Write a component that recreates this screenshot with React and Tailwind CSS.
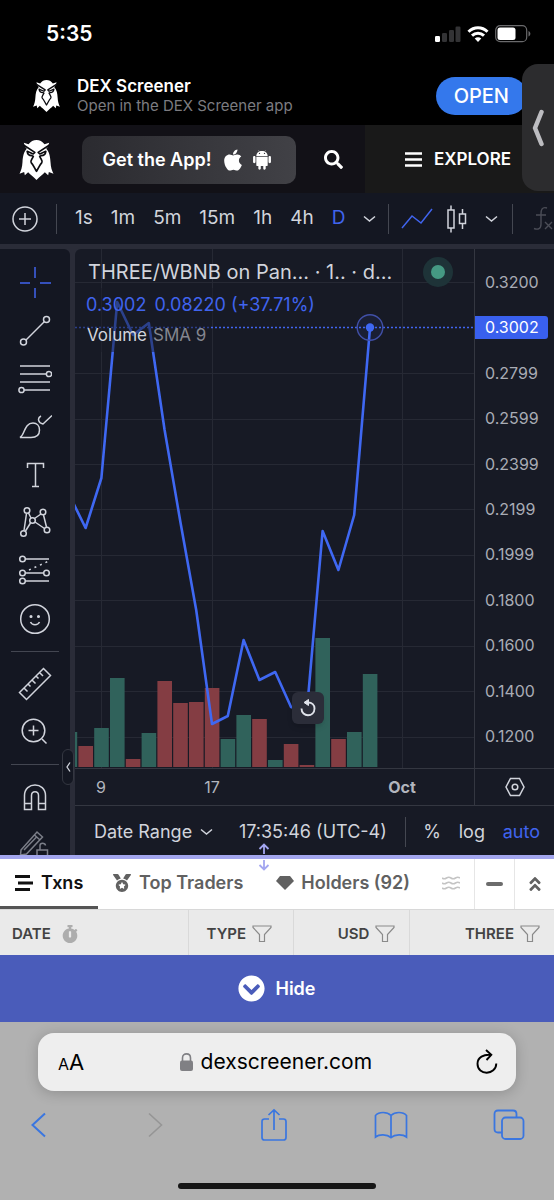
import React from 'react';
import {
    FaAngleDoubleUp,
    FaApple,
    FaChevronCircleDown,
    FaMedal,
    FaSearch,
    FaStopwatch,
} from 'react-icons/fa';
import { IoLogoAndroid } from 'react-icons/io';

const PRICE_LABELS = [
    '0.3200', '0.3002', '0.2799', '0.2599', '0.2399', '0.2199',
    '0.1999', '0.1800', '0.1600', '0.1400', '0.1200',
];

const GRID_ROWS = [33, 124, 170, 215, 260, 306, 351, 397, 442, 488];

// oldest candle first, closing price as y inside the plot
const CLOSES = [247, 279, 229, 53, 86, 74, 181, 273, 361, 475, 467, 391, 431, 423, 458, 463, 282, 321, 266, 79];

const VOLUMES = [
    { top: 483, up: true }, { top: 497, up: false }, { top: 479, up: true }, { top: 429, up: true },
    { top: 510, up: false }, { top: 484, up: true }, { top: 432, up: false }, { top: 454, up: false },
    { top: 453, up: false }, { top: 439, up: false }, { top: 490, up: true }, { top: 466, up: true },
    { top: 470, up: false }, { top: 511, up: true }, { top: 495, up: false }, { top: 516, up: false },
    { top: 389, up: true }, { top: 490, up: false }, { top: 483, up: true }, { top: 425, up: true },
];

const candleX = (i) => 295 - (CLOSES.length - 1 - i) * 15.8;

const EagleLogo = ({ className }) => (
    <svg viewBox="0 0 102 120" className={className} fill="white" aria-hidden="true">
        <path d="M13 8 L27 13 C33 4 42 0 51 0 C60 0 69 4 75 13 L89 8 C87 17 84 22 80 26 C90 36 92 50 93 66 C94 82 97 92 102 101 L88 96 L86 106 L76 97 C70 104 60 111 51 120 C42 111 32 104 26 97 L16 106 L14 96 L0 101 C5 92 8 82 9 66 C10 50 12 36 22 26 C18 22 15 17 13 8 Z" />
        <g fill="none" stroke="#0b0b0f" strokeWidth="5" strokeLinejoin="round">
            <path d="M12 15 L46 37 L41 42 L23 34 C24 43 29 47 37 47 L42 49" />
            <path d="M90 15 L56 37 L61 42 L79 34 C78 43 73 47 65 47 L60 49" />
            <path d="M42 48 C38 58 31 62 35 68 C41 74 45 84 51 94 C57 84 61 74 67 68 C71 62 64 58 60 48" />
        </g>
    </svg>
);

const Chevron = () => (
    <svg width="13" height="8" viewBox="0 0 13 8" fill="none" stroke="currentColor" strokeWidth="1.5" aria-hidden="true">
        <path d="M1 1.5 L6.5 6 L12 1.5" />
    </svg>
);

const FilterIcon = () => (
    <svg width="20" height="18" viewBox="0 0 20 18" fill="none" stroke="#8a8a8a" strokeWidth="1.2" aria-hidden="true">
        <path d="M1 1 H19 V2.5 L12.5 9.5 V16.5 H7.5 V9.5 L1 2.5 Z" />
    </svg>
);

const ToolIcon = ({ children, className = '' }) => (
    <svg width="34" height="34" viewBox="0 0 34 34" fill="none" stroke="currentColor" strokeWidth="1.5" className={className} aria-hidden="true">
        {children}
    </svg>
);

const ToolButton = ({ label, children }) => (
    <button type="button" aria-label={label} className="flex h-12 w-full shrink-0 items-center justify-center">
        {children}
    </button>
);

const StatusBar = () => (
    <div className="flex h-[68px] items-center justify-between bg-black pl-[46px] pr-[23px]">
        <span className="text-[21px] font-semibold leading-7">5:35</span>
        <div className="flex items-center gap-[6px]">
            <svg width="26" height="16" viewBox="0 0 26 16" fill="#333335" aria-label="Signal">
                <rect x="0" y="10" width="5" height="6" rx="1.2" fill="white" />
                <rect x="7" y="7" width="5" height="9" rx="1.2" />
                <rect x="14" y="4" width="5" height="12" rx="1.2" />
                <rect x="20.5" y="0.5" width="5" height="15.5" rx="1.2" />
            </svg>
            <svg width="22" height="16" viewBox="0 0 22 16" fill="none" stroke="white" strokeWidth="3" aria-label="Wi-Fi">
                <path d="M1.5 5.7 C7 0.3 15 0.3 20.5 5.7" />
                <path d="M5 9.6 C8.5 6.3 13.5 6.3 17 9.6" />
                <path d="M11 16 L7.7 12.6 C9.6 10.9 12.4 10.9 14.3 12.6 Z" fill="white" stroke="none" />
            </svg>
            <svg width="36" height="18" viewBox="0 0 36 18" aria-label="Battery">
                <rect x="0.7" y="0.7" width="31" height="16" rx="4.5" fill="none" stroke="#6a6a6c" strokeWidth="1.2" />
                <rect x="2.5" y="2.5" width="18" height="12.4" rx="2.5" fill="white" />
                <path d="M33.5 6 C36 7 36 10.5 33.5 11.5 Z" fill="#6a6a6c" />
            </svg>
        </div>
    </div>
);

const AppBanner = () => (
    <div className="flex h-[57px] items-center bg-black pb-[2px] pl-[33px] pr-[27px]">
        <EagleLogo className="h-8 w-[27px]" />
        <div className="ml-[17px] flex-1">
            <p className="text-[17px] font-semibold leading-5">DEX Screener</p>
            <p className="text-[15px] leading-5 text-[#7c7c80]">Open in the DEX Screener app</p>
        </div>
        <button type="button" className="h-[38px] rounded-full bg-[#3478ec] px-[18px] text-[20px] font-medium text-white">
            OPEN
        </button>
    </div>
);

const SiteHeader = () => (
    <header className="flex h-[68px] items-stretch bg-[#121117]">
        <div className="flex flex-1 items-center pl-[19px] pt-px">
            <EagleLogo className="h-10 w-[35px] shrink-0" />
            <button
                type="button"
                className="ml-7 flex h-12 w-[214px] items-center justify-center rounded-[10px] bg-gradient-to-r from-[#2b2b30] to-[#414146] text-[18px] font-semibold"
            >
                Get the App!
                <FaApple className="ml-[10px]" size={24} />
                <IoLogoAndroid className="ml-1" size={26} />
            </button>
            <button type="button" aria-label="Search" className="ml-7">
                <FaSearch size={19} />
            </button>
        </div>
        <button type="button" className="flex w-[189px] items-center bg-[#191919] pl-10 pt-px text-[17px] font-semibold">
            <svg width="17" height="15" viewBox="0 0 17 15" stroke="white" strokeWidth="2.4" aria-hidden="true">
                <path d="M0 1.5 H17 M0 7.5 H17 M0 13.5 H17" />
            </svg>
            <span className="ml-3">EXPLORE</span>
        </button>
    </header>
);

const Divider = () => <span className="h-[30px] w-px shrink-0 bg-[#444751]" />;

const ChartToolbar = () => (
    <div className="flex h-[51px] items-center overflow-hidden bg-[#141722] text-[19px] text-[#d1d4dc]">
        <button type="button" aria-label="Compare" className="ml-3 mr-[18px] shrink-0">
            <svg width="26" height="26" viewBox="0 0 26 26" fill="none" stroke="currentColor" strokeWidth="1.5" aria-hidden="true">
                <circle cx="13" cy="13" r="12" />
                <path d="M13 7 V19 M7 13 H19" />
            </svg>
        </button>
        <Divider />
        <div className="ml-[18px] mr-3 flex shrink-0 items-center gap-[18px]">
            {['1s', '1m', '5m', '15m', '1h', '4h'].map((interval) => (
                <button type="button" key={interval}>{interval}</button>
            ))}
            <button type="button" className="text-[#4064ee]">D</button>
            <button type="button" aria-label="More intervals"><Chevron /></button>
        </div>
        <Divider />
        <button type="button" aria-label="Line" className="ml-3 shrink-0 text-[#4064ee]">
            <svg width="32" height="22" viewBox="0 0 32 22" fill="none" stroke="currentColor" strokeWidth="1.5" aria-hidden="true">
                <path d="M1 20 L11 8 L20 15 L31 1" />
            </svg>
        </button>
        <button type="button" aria-label="Candles" className="ml-[14px] shrink-0">
            <svg width="20" height="28" viewBox="0 0 20 28" fill="none" stroke="currentColor" strokeWidth="1.5" aria-hidden="true">
                <path d="M4 0.5 V5 M4 23 V27.5 M1 5 H7 V23 H1 Z" />
                <path d="M15.5 4 V9 M15.5 18.5 V24 M12.5 9 H18.5 V18.5 H12.5 Z" />
            </svg>
        </button>
        <button type="button" aria-label="Chart types" className="ml-[18px] mr-[14px] shrink-0"><Chevron /></button>
        <Divider />
        <button type="button" aria-label="Indicators" className="ml-5 shrink-0 text-[#4b4d57]">
            <svg width="24" height="26" viewBox="0 0 24 26" fill="none" stroke="currentColor" strokeWidth="1.4" aria-hidden="true">
                <path d="M14 2 C9 0.5 8 4 8 8 V18 C8 23 5 24 1 22.5 M3 9 H13 M12 16 L19 23 M19 16 L12 23" />
            </svg>
        </button>
    </div>
);

const DrawingTools = () => (
    <aside className="flex h-[606px] w-[70px] shrink-0 flex-col overflow-hidden rounded-tr-md bg-[#141722] pt-[10px] text-[#d1d4dc]">
        <ToolButton label="Crosshair">
            <ToolIcon className="text-[#4064ee]">
                <path d="M17 1 V12 M17 22 V32 M2 17 H12 M22 17 H33" />
            </ToolIcon>
        </ToolButton>
        <ToolButton label="Trend line">
            <ToolIcon>
                <circle cx="5.5" cy="28" r="3" />
                <circle cx="28.5" cy="5.5" r="3" />
                <path d="M8 26 L26.5 7.5" />
            </ToolIcon>
        </ToolButton>
        <ToolButton label="Fibonacci">
            <ToolIcon>
                <path d="M2 4 H32 M2 12 H28 M2 20 H32 M6 28 H32" />
                <circle cx="31" cy="12" r="2.6" />
                <circle cx="3.5" cy="28" r="2.6" />
            </ToolIcon>
        </ToolButton>
        <ToolButton label="Brush">
            <ToolIcon>
                <path d="M2 27.5 C7 25 6 13 15 13 C19 13 21.5 16 21.5 20 C21.5 25 18 27.5 13 27.5 Z" />
                <path d="M23 6 C19 8 20 13 25 14 L34 5.5" />
            </ToolIcon>
        </ToolButton>
        <ToolButton label="Text">
            <ToolIcon>
                <path d="M9.5 10 V5.5 H25.5 V10 M17.5 5.5 V28.500 M14 28.500 H21" />
            </ToolIcon>
        </ToolButton>
        <ToolButton label="Patterns">
            <ToolIcon>
                <circle cx="9" cy="4.5" r="2.8" />
                <circle cx="25" cy="6" r="2.8" />
                <circle cx="14.5" cy="14.5" r="2.8" />
                <circle cx="5.5" cy="27.5" r="2.8" />
                <circle cx="29" cy="24" r="2.8" />
                <path d="M8.5 7.5 L6 24.5 M10.5 7 L13 12 M16.5 12.5 L23 8 M12.5 17 L7.5 25 M17 16 L26.5 22.5 M25.5 9 L28.5 21" />
            </ToolIcon>
        </ToolButton>
        <ToolButton label="Prediction">
            <ToolIcon>
                <path d="M7 5 H31 M7 19 H26 M7 27 H31" />
                <path d="M11 16 L31 7" strokeDasharray="2 4" />
                <circle cx="4.5" cy="5" r="2.8" />
                <circle cx="4.5" cy="19" r="2.8" />
                <circle cx="28.5" cy="19" r="2.8" />
                <circle cx="4.5" cy="27" r="2.8" />
            </ToolIcon>
        </ToolButton>
        <ToolButton label="Icons">
            <ToolIcon>
                <circle cx="17" cy="17" r="14.3" />
                <circle cx="13" cy="14.5" r="0.8" fill="currentColor" />
                <circle cx="20.5" cy="14.5" r="0.8" fill="currentColor" />
                <path d="M12.5 20 C14 23.5 20 23.5 21.5 20" />
            </ToolIcon>
        </ToolButton>
        <hr className="mx-[11px] my-2 shrink-0 border-[#434651]" />
        <ToolButton label="Measure">
            <ToolIcon>
                <path d="M1.5 25.5 L25.5 1.5 L32.5 8.5 L8.5 32.5 Z M6 21 L9.5 24.5 M10 17 L12.5 19.5 M14 13 L17.5 16.5 M18 9 L20.5 11.5 M21.5 5.5 L25 9" />
            </ToolIcon>
        </ToolButton>
        <ToolButton label="Zoom in">
            <ToolIcon>
                <circle cx="15.5" cy="15.5" r="11.3" />
                <path d="M15.5 10.5 V20.5 M10.5 15.5 H20.5 M24 24 L28.5 28.5" />
            </ToolIcon>
        </ToolButton>
        <hr className="mx-[11px] my-2 shrink-0 border-[#434651]" />
        <ToolButton label="Magnet">
            <ToolIcon>
                <path d="M6.5 29.5 V15.5 C6.5 1.5 27.5 1.5 27.5 15.5 V29.5 H20.5 V15.5 C20.5 10.5 13.5 10.5 13.5 15.5 V29.5 Z M6.5 23.5 H13.5 M20.5 23.5 H27.5" />
            </ToolIcon>
        </ToolButton>
        <ToolButton label="Lock drawings">
            <ToolIcon className="text-[#7b7e88]">
                <path d="M3 22 L19 4 L24.5 9 L8.5 26 L2.5 27 Z M16.5 7 L22 12 M6 22 L19 8.5" />
                <path d="M19 22 H29.5 V31 H19 Z M22 22 V17.5 C22 14.5 27 14.5 27.5 17.5" />
            </ToolIcon>
        </ToolButton>
    </aside>
);

const Plot = () => {
    const line = CLOSES.map((y, i) => `${candleX(i)},${y}`).join(' ');

    return (
        <svg viewBox="0 0 399 556" preserveAspectRatio="xMaxYMid slice" className="h-[556px] w-full" aria-label="Price and volume chart">
            <g stroke="#262934" strokeWidth="1">
                {GRID_ROWS.map((y) => <path key={y} d={`M0 ${y + 0.5} H399`} />)}
                <path d="M26.5 0 V519 M137.5 0 V519 M327.5 0 V519" />
            </g>
            {VOLUMES.map((bar, i) => (
                <rect
                    key={i}
                    x={candleX(i) - 7.2}
                    y={bar.top}
                    width="14.6"
                    height={518 - bar.top}
                    fill={bar.up ? '#30625b' : '#843d43'}
                />
            ))}
            <path d="M0 519.5 H399" stroke="#343741" />
            <path d="M0 78.5 H399" stroke="#4064ee" strokeWidth="1.5" strokeDasharray="2 2" />
            <polyline points={line} fill="none" stroke="#3f68f2" strokeWidth="2.6" strokeLinejoin="round" />
            <circle cx="295" cy="78.5" r="12.8" fill="#3f68f2" fillOpacity="0.08" stroke="#4150a8" strokeWidth="1.4" />
            <circle cx="295" cy="78.5" r="4.2" fill="#3f68f2" />
            <g fill="#b2b5be" fontSize="16" textAnchor="middle">
                <text x="26" y="544">9</text>
                <text x="137" y="544">17</text>
                <text x="327" y="544" fontWeight="700">Oct</text>
            </g>
        </svg>
    );
};

const Legend = () => (
    <div className="absolute left-0 top-[7px] w-full">
        <div className="flex h-8 items-center pl-[13px] text-[20px] text-[#d1d4dc]">
            THREE/WBNB on Pan... · 1.. · d...
        </div>
        <div className="flex h-8 w-[244px] items-center gap-2 whitespace-nowrap bg-[#171a25]/50 pl-[11px] text-[18px] text-[#4064ee]">
            <span>0.3002</span>
            <span>0.08220 (+37.71%)</span>
        </div>
        <div className="flex h-8 w-[136px] items-center gap-[6px] whitespace-nowrap bg-[#171a25]/50 pl-3 text-[17px] text-[#d1d4dc]">
            Volume <span className="text-[#84868f]">SMA 9</span>
        </div>
    </div>
);

const ChartArea = () => (
    <section className="min-w-0 flex-1 overflow-hidden rounded-tl-md bg-[#171a25]">
        <div className="flex h-[556px]">
            <div className="relative min-w-0 flex-1">
                <Plot />
                <Legend />
                <span className="absolute right-[21px] top-2 flex size-[30px] items-center justify-center rounded-full bg-[#1e3338]">
                    <span className="size-[14px] rounded-full bg-[#459983]" />
                </span>
                <button
                    type="button"
                    aria-label="Reset chart"
                    className="absolute right-[150px] top-[443px] flex size-8 items-center justify-center rounded-md bg-[#2b2d39] text-[#e0e3eb] shadow-md"
                >
                    <svg width="16" height="18" viewBox="0 0 16 18" fill="none" stroke="currentColor" strokeWidth="1.9" aria-hidden="true">
                        <path d="M1.5 9.5 C1.5 18.5 14.5 18.5 14.5 9.5 C14.5 6 12 3.5 8 3.5" />
                        <path d="M8.5 0.5 V6.5 L4 3.5 Z" fill="currentColor" strokeWidth="1" />
                    </svg>
                </button>
            </div>
            <div className="flex w-20 shrink-0 flex-col border-l border-[#343741] text-[16px] text-[#a9acb5]">
                <div className="flex h-[519px] flex-col pb-[9px] pt-[10px]">
                    {PRICE_LABELS.map((price) => (
                        <div key={price} className="flex flex-1 items-center">
                            {price === '0.3002' ? (
                                <span className="mr-[6px] flex h-[23px] flex-1 items-center rounded-r-[3px] bg-[#3960ee] pl-[10px] text-white">
                                    {price}
                                </span>
                            ) : (
                                <span className="pl-[10px]">{price}</span>
                            )}
                        </div>
                    ))}
                </div>
                <button type="button" aria-label="Axis settings" className="flex flex-1 items-center justify-center border-t border-[#343741] text-[#d1d4dc]">
                    <svg width="20" height="20" viewBox="0 0 20 20" fill="none" stroke="currentColor" strokeWidth="1.5" aria-hidden="true">
                        <path d="M5.5 1.5 H14.5 L19 10 L14.5 18.5 H5.5 L1 10 Z" />
                        <circle cx="10" cy="10" r="2.8" />
                    </svg>
                </button>
            </div>
        </div>
        <div className="flex h-[50px] items-center justify-between whitespace-nowrap border-t border-[#343741] pl-[19px] pr-[14px] pt-[2px] text-[18px] text-[#d1d4dc]">
            <button type="button" className="flex items-center gap-2">
                Date Range <Chevron />
            </button>
            <button type="button" className="ml-2">17:35:46 (UTC-4)</button>
            <Divider />
            <button type="button">%</button>
            <button type="button">log</button>
            <button type="button" className="text-[#4064ee]">auto</button>
        </div>
    </section>
);

const Tabs = () => (
    <nav className="flex h-[51px] items-stretch whitespace-nowrap border-b border-[#d8d8d8] bg-white text-[18px] font-semibold text-[#616161]">
        <button type="button" className="flex w-[98px] items-center gap-2 border-b-[3px] border-[#555] pl-[15px] text-[#111]">
            <svg width="18" height="16" viewBox="0 0 18 16" stroke="currentColor" strokeWidth="3" aria-hidden="true">
                <path d="M0 1.5 H15 M3 8 H18 M0 14.5 H15" />
            </svg>
            Txns
        </button>
        <button type="button" className="ml-[15px] flex items-center gap-2 pb-[3px]">
            <FaMedal size={18} /> Top Traders
        </button>
        <button type="button" className="ml-[33px] flex items-center gap-[7px] pb-[3px]">
            <svg width="18" height="14" viewBox="0 0 18 14" fill="currentColor" aria-hidden="true">
                <path d="M4 0 H14 L18 5 L9 14 L0 5 Z" />
            </svg>
            Holders (92)
        </button>
        <div className="ml-auto flex items-center pb-[3px] pr-[14px]">
            <svg width="18" height="14" viewBox="0 0 18 14" fill="none" stroke="#c4c4c4" strokeWidth="1.6" aria-hidden="true">
                <path d="M0 2 Q2.2 3.6 4.5 2 T9 2 T13.5 2 T18 2 M0 7 Q2.2 8.6 4.5 7 T9 7 T13.5 7 T18 7 M0 12 Q2.2 13.6 4.5 12 T9 12 T13.5 12 T18 12" />
            </svg>
        </div>
        <button type="button" aria-label="Minimize" className="flex w-10 items-center justify-center border-l border-[#e6e6e6]">
            <span className="h-1 w-[17px] rounded-sm bg-[#6c6c6c]" />
        </button>
        <button type="button" aria-label="Maximize" className="flex w-10 items-center justify-center border-l border-[#e6e6e6]">
            <FaAngleDoubleUp size={18} />
        </button>
    </nav>
);

const TxnsTable = () => (
    <table className="w-full table-fixed border-collapse bg-[#eaeaea] text-[15px] font-semibold text-[#434343]">
        <thead>
            <tr className="h-[45px]">
                <th className="w-[34%] border-r border-[#d9d9d9] pl-3 pt-[3px] font-semibold">
                    <span className="flex items-center gap-[10px]">DATE <FaStopwatch size={18} className="text-[#adadad]" /></span>
                </th>
                <th className="w-[19%] border-r border-[#d9d9d9] pr-[21px] pt-[3px] font-semibold">
                    <span className="flex items-center justify-end gap-[6px]">TYPE <FilterIcon /></span>
                </th>
                <th className="w-[21%] border-r border-[#d9d9d9] pr-[14px] pt-[3px] font-semibold">
                    <span className="flex items-center justify-end gap-[6px]">USD <FilterIcon /></span>
                </th>
                <th className="pr-[14px] pt-[3px] font-semibold">
                    <span className="flex items-center justify-end gap-[6px]">THREE <FilterIcon /></span>
                </th>
            </tr>
        </thead>
    </table>
);

const NavButton = ({ label, className = '', children }) => (
    <button type="button" aria-label={label} className={`flex w-[34px] items-center justify-center ${className}`}>
        {children}
    </button>
);

const BrowserBar = () => (
    <footer className="bg-[#b1b1b1] pt-[11px]">
        <div className="mx-[38px] flex h-[58px] items-center justify-between rounded-2xl bg-[#eeeeee] pl-5 pr-[18px] text-black shadow-[0_2px_14px_rgba(0,0,0,0.2)]">
            <button type="button" aria-label="Page settings" className="flex items-baseline">
                <span className="text-[16px]">A</span>
                <span className="text-[22px]">A</span>
            </button>
            <label className="flex items-center gap-2">
                <svg width="13" height="18" viewBox="0 0 13 18" aria-label="Secure">
                    <rect x="0" y="7.5" width="13" height="10.5" rx="2" fill="#808084" />
                    <path d="M2.5 8 V5 C2.5 -0.5 10.5 -0.5 10.5 5 V8" fill="none" stroke="#808084" strokeWidth="1.6" />
                </svg>
                <input type="text" aria-label="Address" defaultValue="dexscreener.com" className="w-[180px] bg-transparent text-[21px] outline-none" />
            </label>
            <button type="button" aria-label="Reload">
                <svg width="22" height="26" viewBox="0 0 22 26" fill="none" stroke="currentColor" strokeWidth="1.9" aria-hidden="true">
                    <path d="M20.3 14.5 C20 26.5 1.5 27 1.5 14.8 C1.5 8 8 5.5 14 5.8 M10 1 L15.3 5.9 L10.5 11" />
                </svg>
            </button>
        </div>
        <div className="flex h-[68px] items-center justify-between pl-[21px] pr-7 text-[#3a76e0]">
            <NavButton label="Back">
                <svg width="15" height="26" viewBox="0 0 15 26" fill="none" stroke="currentColor" strokeWidth="2" aria-hidden="true">
                    <path d="M14 1.5 L1.5 13 L14 24.5" />
                </svg>
            </NavButton>
            <NavButton label="Forward" className="text-[#959595]">
                <svg width="15" height="26" viewBox="0 0 15 26" fill="none" stroke="currentColor" strokeWidth="1.6" aria-hidden="true">
                    <path d="M1 1.5 L13.5 13 L1 24.5" />
                </svg>
            </NavButton>
            <NavButton label="Share">
                <svg width="28" height="34" viewBox="0 0 28 34" fill="none" stroke="currentColor" strokeWidth="1.7" aria-hidden="true">
                    <path d="M9 11 H4.5 Q2 11 2 13.5 V29.5 Q2 32 4.5 32 H23.5 Q26 32 26 29.5 V13.5 Q26 11 23.5 11 H19 M14 22 V2 M8.5 7 L14 1.8 L19.5 7" />
                </svg>
            </NavButton>
            <NavButton label="Bookmarks">
                <svg width="34" height="28" viewBox="0 0 34 28" fill="none" stroke="currentColor" strokeWidth="1.7" aria-hidden="true">
                    <path d="M17 4.5 C13 0.5 5 0.5 1.5 4.5 V26 C5 23 13 23 17 26.5 C21 23 29 23 32.5 26 V4.5 C29 0.5 21 0.5 17 4.5 V26.5" />
                </svg>
            </NavButton>
            <NavButton label="Tabs">
                <svg width="32" height="32" viewBox="0 0 32 32" fill="none" stroke="currentColor" strokeWidth="1.8" aria-hidden="true">
                    <rect x="9" y="8.5" width="21.5" height="21.5" rx="3.5" />
                    <path d="M9 23.5 H5 Q1.5 23.5 1.5 20 V5 Q1.5 1.5 5 1.5 H20 Q23.5 1.5 23.5 5 V8.5" />
                </svg>
            </NavButton>
        </div>
        <div className="flex h-[41px] items-center justify-center pt-3">
            <span className="h-[6px] w-[198px] rounded-full bg-[#161616]" />
        </div>
    </footer>
);

const App = () => (
    <div className="relative overflow-hidden bg-[#b1b1b1] font-[Inter,sans-serif] text-white">
        <StatusBar />
        <AppBanner />
        <SiteHeader />
        <main>
            <ChartToolbar />
            <div className="relative flex gap-[5px] bg-[#2a2c38] pt-[5px]">
                <DrawingTools />
                <ChartArea />
                <button
                    type="button"
                    aria-label="Collapse toolbar"
                    className="absolute left-[62px] top-[505px] flex h-9 w-3 items-center justify-center rounded-md border border-[#343741] bg-[#141722]"
                >
                    <svg width="5" height="10" viewBox="0 0 5 10" fill="none" stroke="#d1d4dc" strokeWidth="1.3" aria-hidden="true">
                        <path d="M4 0.5 L1 5 L4 9.5" />
                    </svg>
                </button>
            </div>
            <div className="relative h-1 bg-[#a3a6ee]">
                <svg width="12" height="28" viewBox="0 0 12 28" fill="none" stroke="#a3a6f0" strokeWidth="1.8" className="absolute -top-3 left-[258px]" aria-hidden="true">
                    <path d="M6 11 V2 M1.5 6 L6 1.5 L10.5 6 M6 17 V26 M1.5 22 L6 26.5 L10.5 22" />
                </svg>
            </div>
            <Tabs />
            <TxnsTable />
            <button type="button" className="flex h-[67px] w-full items-center justify-center gap-[10px] bg-[#4a5cba] text-[18px] font-semibold">
                <FaChevronCircleDown size={27} /> Hide
            </button>
        </main>
        <BrowserBar />
        <button
            type="button"
            aria-label="Show side panel"
            className="absolute right-0 top-16 flex h-[127px] w-8 items-center justify-center rounded-l-2xl bg-[#2c2c2e]"
        >
            <svg width="12" height="38" viewBox="0 0 12 38" fill="none" stroke="#bcbcc0" strokeWidth="4.5" strokeLinecap="round" strokeLinejoin="round" aria-hidden="true">
                <path d="M9.5 3 L3 19 L9.5 35" />
            </svg>
        </button>
    </div>
);

export default App;
